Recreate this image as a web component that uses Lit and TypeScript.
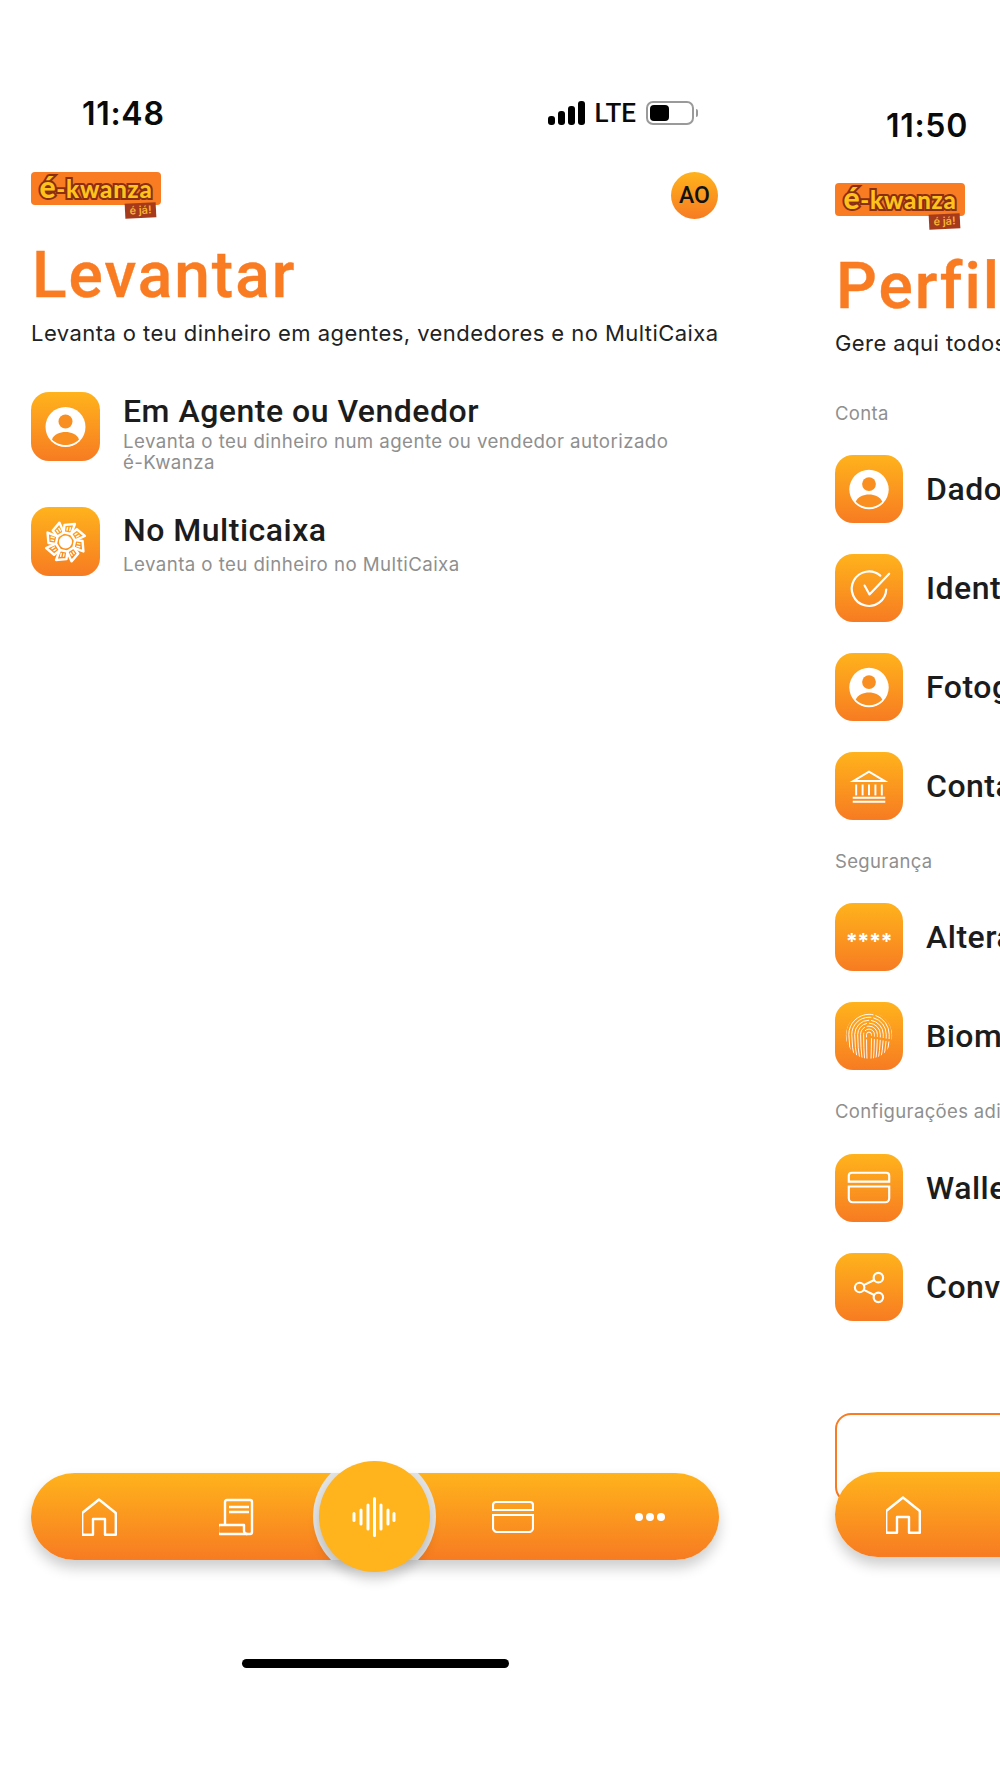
import { LitElement, html, css, svg } from "lit";
import { customElement } from "lit/decorators.js";

const W = "#fff";
const tile = (body: unknown) => html`<div class="tile"><svg viewBox="0 0 69 69">${body}</svg></div>`;

const person = svg`<circle cx="34.5" cy="35" r="20" fill="${W}"/><circle cx="34.5" cy="29.5" r="7" fill="#F98F20"/><path d="M21 47.5C23 42 29 40 34.5 40C40 40 46 42 48 47.5C44 51.5 39 53 34.5 53C30 53 25 51.5 21 47.5Z" fill="#F98F20"/>`;

const petals = [0, 45, 90, 135, 180, 225, 270, 315];
const flower = svg`<g transform="translate(34.5 35)"><circle r="6.5" fill="${W}"/>${petals.map(a => svg`<g transform="rotate(${a + 12})" fill="none" stroke="${W}" stroke-linejoin="round"><path d="M-3.8 -9L-4.5 -16.5L5.5 -19.5L3.8 -9Z" stroke-width="2.4"/><path d="M-1 -11.5V-15M1.8 -11.5V-15.5" stroke-width="1.4"/></g>`)}</g>`;

const check = svg`<g fill="none" stroke="${W}" stroke-width="2.2" stroke-linecap="round" stroke-linejoin="round"><path d="M46 22A17.5 17.5 0 1 0 52 36"/><path d="M30 32L35 41L55 20"/></g>`;

const cols = [21.5, 28, 34.5, 41, 47.5];
const bank = svg`<g fill="none" stroke="${W}" stroke-width="2"><path d="M18.5 29.5L34.5 20L50.5 29.5Z"/>${cols.map(x => svg`<path d="M${x} 33V44"/>`)}<path d="M18 46.5H51M18 50.5H51"/></g>`;

const stars = svg`<text x="34.5" y="47" text-anchor="middle" class="stars">****</text>`;

const radii = [2.5, 5.5, 8.5, 11.5, 14.5, 17.5, 20.5, 23.5];
const cx = 34.5;
const finger = svg`<defs><clipPath id="fp"><circle cx="34.5" cy="34" r="23.5"/></clipPath></defs><g clip-path="url(#fp)" fill="none" stroke="${W}" stroke-width="0.95">${radii.map((r, i) => svg`<path d="M${cx - r * 0.8} 60Q${cx - r} 46 ${cx - r} 33A${r} ${r} 0 0 1 ${cx + r} 33Q${cx + r} 46 ${cx + r * 0.8} 60" stroke-dasharray="${22 + i * 7} 2 ${12 + i * 3} 2.5"/>`)}</g>`;

const card = svg`<g fill="none" stroke="${W}" stroke-width="2.2"><path d="M14 28V22a3 3 0 0 1 3-3H52a3 3 0 0 1 3 3V28Z"/><path d="M14 33H55V45a4 4 0 0 1-4 4H18a4 4 0 0 1-4-4Z"/></g>`;

const share = svg`<g fill="none" stroke="${W}" stroke-width="2.2"><circle cx="44" cy="25" r="4.8"/><circle cx="25" cy="35" r="4.8"/><circle cx="44" cy="45" r="4.8"/><path d="M29.2 32.6L39.8 27.4M29.2 37.4L39.8 42.6"/></g>`;

const homeIcon = html`<svg class="home-i" viewBox="1 0 36 38"><path d="M1.2 36.8V15L18 1.5L34.8 15V36.8H24V21H12V36.8Z" fill="none" stroke="#fff" stroke-width="2.4" stroke-linejoin="round"/></svg>`;
const receiptIcon = html`<svg class="rec-i" viewBox="2 0 36 38" fill="none" stroke="#fff" stroke-width="2.4"><path d="M8 27V4a2 2 0 0 1 2-2H33a2 2 0 0 1 2 2V34a2 2 0 0 1-2 2H29"/><path d="M12 9H32M12 14H32" /><path d="M3 27H27V33a3 3 0 0 0 3 3H3a2 2 0 0 1-2-2V29a2 2 0 0 1 2-2Z" stroke-linejoin="round"/></svg>`;
const cardIcon = html`<svg class="card-i" viewBox="0 0 42 32" fill="none" stroke="#fff" stroke-width="2.2"><path d="M1 9V4a3 3 0 0 1 3-3H38a3 3 0 0 1 3 3V9Z"/><path d="M1 14H41V27a4 4 0 0 1-4 4H5a4 4 0 0 1-4-4Z"/></svg>`;
const bars: [number, number][] = [[2, 10], [9, 17], [16, 27], [22.5, 40], [29, 27], [36, 17], [42, 10]];
const wave = html`<svg class="wave-i" viewBox="0 0 45 42" stroke="#fff" stroke-width="3" stroke-linecap="round">${bars.map(([x, h]) => svg`<path d="M${x} ${21 - h / 2 + 1.5}V${21 + h / 2 - 1.5}"/>`)}</svg>`;

const logo = html`<div class="logo"><span class="mark"><span class="big">é</span>-kwanza</span><span class="tag">é já!</span></div>`;

const nav = (full: boolean) => html`<div class="nav ${full ? "" : "cut"}">
  ${full ? html`<div class="notch"><i></i></div>` : ""}
  <div class="slot">${homeIcon}</div>
  <div class="slot">${receiptIcon}</div>
  <div class="slot"></div>
  <div class="slot">${cardIcon}</div>
  <div class="slot"><span class="dots"><i></i><i></i><i></i></span></div>
  ${full ? html`<div class="talk">${wave}</div>` : ""}
</div>`;

const row = (icon: unknown, t: string) => html`<div class="rrow">${tile(icon)}<div class="rt">${t}</div></div>`;

@customElement("app-root")
export class AppRoot extends LitElement {
  static styles = css`
    :host { display: flex; width: 1000px; height: 1778px; overflow: hidden; background: #fff; font-family: "Inter", "Liberation Sans", sans-serif; color: #1c1c1c; }
    .screen { flex: none; width: 750px; height: 1778px; box-sizing: border-box; padding: 95px 31px 0; display: flex; flex-direction: column; }
    .second { margin-left: 54px; padding-top: 107px; }
    .status { height: 36px; display: flex; align-items: center; justify-content: space-between; padding-left: 51px; }
    .time { font-size: 32px; font-weight: 600; color: #0a0a0a; letter-spacing: 0.7px; }
    .sys { display: flex; align-items: center; gap: 10px; padding-right: 21px; }
    .signal { display: flex; align-items: flex-end; gap: 3.5px; height: 24px; }
    .signal i { width: 6.5px; border-radius: 3px; background: #000; }
    .lte { font: 500 26px "Roboto", sans-serif; color: #0a0a0a; }
    .batt { width: 48px; height: 24px; box-sizing: border-box; border: 2px solid #9a9a9a; border-radius: 7px; padding: 2px; margin-right: 4px; position: relative; }
    .batt b { display: block; width: 19px; height: 16px; background: #000; border-radius: 4px; }
    .batt u { position: absolute; right: -6px; top: 6px; width: 2px; height: 8px; background: #999; border-radius: 0 2px 2px 0; }
    .head { display: flex; justify-content: space-between; margin-top: 41px; height: 46px; }
    .second .head { margin-top: 40px; }
    .logo { position: relative; width: 130px; height: 33px; background: #F97B22; border-radius: 4px; display: flex; align-items: center; justify-content: center; }
    .mark { font: 900 24px "Lato", sans-serif; color: #FFC21A; -webkit-text-stroke: 4px #8A2E14; paint-order: stroke fill; line-height: 33px; white-space: nowrap; letter-spacing: 0.8px; }
    .big { font-size: 30px; line-height: 20px; }
    .tag { position: absolute; left: 94px; top: 31px; width: 31px; height: 15px; background: #A53A1C; color: #F9B233; font: 600 11px/15px "Inter", sans-serif; text-align: center; transform: rotate(-3deg); }
    .avatar { width: 47px; height: 47px; margin-right: 1px; border-radius: 50%; background: linear-gradient(#FFB31C, #F77B22); display: flex; align-items: center; justify-content: center; font: 500 23px "Roboto", sans-serif; color: #111; }
    h1 { margin: 20px 0 0 1px; font: 500 64px/76px "Roboto", sans-serif; color: #F97B22; letter-spacing: 2px; -webkit-text-stroke: 0.4px #F97B22; }
    .desc { margin: 5px 0 0; font-size: 22px; line-height: 28px; color: #222; white-space: nowrap; letter-spacing: 0.44px; }
    .second .desc { margin-top: 4px; }
    .opts { margin-top: 45px; display: flex; flex-direction: column; gap: 34px; }
    .opt { display: flex; gap: 23px; align-items: flex-start; }
    .tile { flex: none; width: 69px; height: 69px; border-radius: 18px; background: linear-gradient(#FFB31C, #F77B22); }
    .tile svg { display: block; width: 100%; height: 100%; }
    .stars { fill: #fff; font: 700 22px "Inter", sans-serif; letter-spacing: -0.5px; }
    .ot { font: 500 32px/38px "Roboto", sans-serif; color: #1c1c1c; letter-spacing: 0.5px; }
    .os { margin-top: 1px; font-size: 18.7px; line-height: 21px; color: #8f8f8f; width: 590px; letter-spacing: 0.42px; }
    .os span { white-space: nowrap; }
    .single .otxt { padding-top: 4px; }
    .single .os { margin-top: 5px; }
    .section { font-size: 18.5px; line-height: 22px; color: #8f8f8f; letter-spacing: 0.35px; white-space: nowrap; }
    .gap-first { margin-top: 45px; }
    .gap-sec { margin-top: 30px; }
    .rows { display: flex; flex-direction: column; gap: 31px; margin-top: 31px; }
    .rows.last { margin-top: 32px; }
    .rrow { display: flex; align-items: center; gap: 23px; }
    .second .tile { width: 68px; height: 68px; }
    .rt { font: 500 32px/34px "Roboto", sans-serif; white-space: nowrap; letter-spacing: 0.5px; }
    .nav { position: relative; z-index: 1; height: 87px; margin-top: auto; border-radius: 44px; background: linear-gradient(#FFB31C, #F77B22); box-shadow: 0 8px 14px rgba(0,0,0,.2); display: grid; grid-template-columns: repeat(5, 1fr); align-items: center; }
    .nav.cut { height: 85px; margin-top: -31px; }
    .notch { position: absolute; inset: 0; overflow: hidden; border-radius: 44px; }
    .notch i { position: absolute; left: 282px; top: -18px; width: 123px; height: 123px; border-radius: 50%; background: #E2E2E2; }
    .slot { position: relative; display: flex; justify-content: center; align-items: center; }
    .home-i, .rec-i { width: 36px; height: 38px; }
    .card-i { width: 42px; height: 32px; }
    .wave-i { width: 45px; height: 42px; }
    .dots { display: flex; gap: 3px; }
    .dots i { width: 8px; height: 8px; border-radius: 50%; background: #fff; }
    .talk { position: absolute; left: 288px; top: -12px; width: 111px; height: 111px; border-radius: 50%; background: #FFB31C; box-shadow: 0 8px 12px rgba(0,0,0,.16); display: flex; align-items: center; justify-content: center; }
    .bar { width: 267px; height: 9px; border-radius: 5px; background: #000; margin: 99px auto 110px; }
    .ghost { height: 90px; margin-top: 92px; border: 2px solid #F97B22; border-radius: 16px; box-sizing: border-box; }
  `;

  render() {
    return html`
      <section class="screen">
        <div class="status">
          <span class="time">11:48</span>
          <div class="sys">
            <div class="signal"><i style="height:9px"></i><i style="height:14px"></i><i style="height:19px"></i><i style="height:24px"></i></div>
            <span class="lte">LTE</span>
            <div class="batt"><b></b><u></u></div>
          </div>
        </div>
        <div class="head">${logo}<div class="avatar">AO</div></div>
        <h1>Levantar</h1>
        <p class="desc">Levanta o teu dinheiro em agentes, vendedores e no MultiCaixa</p>
        <div class="opts">
          <div class="opt">${tile(person)}<div class="otxt"><div class="ot">Em Agente ou Vendedor</div><div class="os">Levanta o teu dinheiro num agente ou vendedor autorizado <span>é-Kwanza</span></div></div></div>
          <div class="opt single">${tile(flower)}<div class="otxt"><div class="ot">No Multicaixa</div><div class="os">Levanta o teu dinheiro no MultiCaixa</div></div></div>
        </div>
        ${nav(true)}
        <div class="bar"></div>
      </section>
      <section class="screen second">
        <div class="status"><span class="time">11:50</span></div>
        <div class="head">${logo}</div>
        <h1>Perfil</h1>
        <p class="desc">Gere aqui todos os teus dados</p>
        <div class="section gap-first">Conta</div>
        <div class="rows">
          ${row(person, "Dados pessoais")}${row(check, "Identificação")}${row(person, "Fotografia")}${row(bank, "Conta bancária")}
        </div>
        <div class="section gap-sec">Segurança</div>
        <div class="rows">
          ${row(stars, "Alterar PIN")}${row(finger, "Biometria")}
        </div>
        <div class="section gap-sec">Configurações adicionais</div>
        <div class="rows last">
          ${row(card, "Wallet")}${row(share, "Convidar amigos")}
        </div>
        <div class="ghost"></div>
        ${nav(false)}
      </section>
    `;
  }
}
